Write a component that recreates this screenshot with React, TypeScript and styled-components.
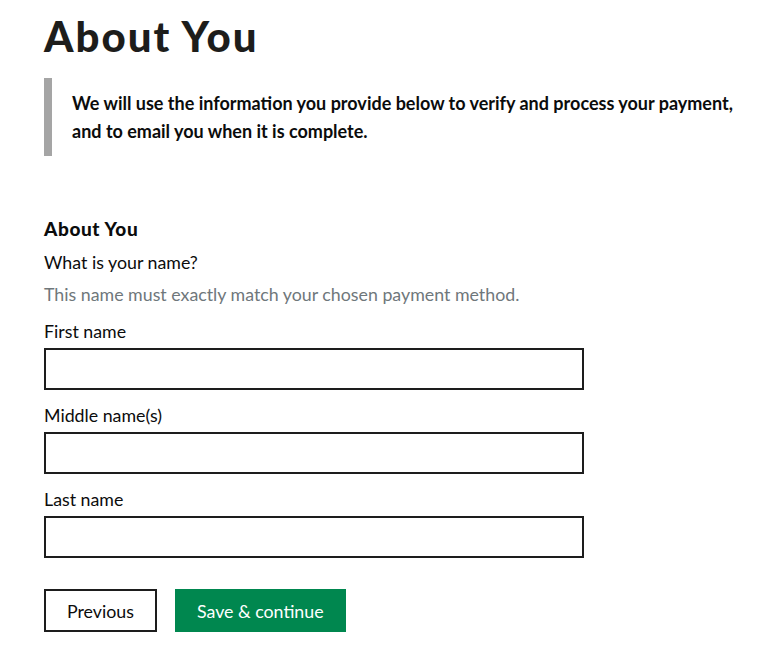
import { createGlobalStyle } from 'styled-components'
import styled from 'styled-components'

const GlobalStyle = createGlobalStyle`
  body {
    margin: 0;
    background: #ffffff;
    color: #0b0c0c;
    font-family: Lato, "Liberation Sans", sans-serif;
  }
`

const fields = ['First name', 'Middle name(s)', 'Last name']

const App = () => (
  <>
    <GlobalStyle />
    <Page>
      <Heading>About You</Heading>
      <Inset>
        We will use the information you provide below to verify and process your payment,
        and to email you when it is complete.
      </Inset>
      <Fieldset>
        <Legend>About You</Legend>
        <Question>What is your name?</Question>
        <Hint>This name must exactly match your chosen payment method.</Hint>
        {fields.map((f) => (
          <Group key={f}>
            <Label>{f}</Label>
            <Input type="text" />
          </Group>
        ))}
      </Fieldset>
      <Actions>
        <Button>Previous</Button>
        <Button primary>Save &amp; continue</Button>
      </Actions>
    </Page>
  </>
)

export default App

const Page = styled.div`
  padding: 12px 0 0 44px;
  width: 728px;
`

const Heading = styled.h1`
  margin: 0;
  font-family: Lato, sans-serif;
  font-weight: 900;
  font-size: 42px;
  line-height: 48px;
  letter-spacing: 2px;
  color: #1d1d1b;
`

const Inset = styled.div`
  margin-top: 18px;
  max-width: 690px;
  border-left: 8px solid #a5a5a5;
  padding: 11px 0 11px 20px;
  font-size: 18px;
  font-weight: 700;
  line-height: 28px;
  color: #0b0c0c;
`

const Fieldset = styled.div`
  margin-top: 61px;
  display: flex;
  flex-direction: column;
`

const Legend = styled.div`
  font-size: 19px;
  font-weight: 900;
  letter-spacing: 0.6px;
  line-height: 24px;
  color: #0b0c0c;
`

const Question = styled.div`
  margin-top: 9px;
  font-size: 17.8px;
  line-height: 24px;
`

const Hint = styled.div`
  margin-top: 8px;
  font-size: 17.8px;
  line-height: 24px;
  color: #6f777b;
`

const Group = styled.div`
  margin-top: 13px;
  display: flex;
  flex-direction: column;
  & + & {
    margin-top: 13px;
  }
`

const Label = styled.label`
  font-size: 17.8px;
  line-height: 24px;
  margin-bottom: 5px;
`

const Input = styled.input`
  box-sizing: border-box;
  width: 540px;
  height: 42px;
  border: 2px solid #1d1d1d;
  border-radius: 0;
  padding: 4px 8px;
  font: inherit;
  outline: none;
`

const Actions = styled.div`
  margin-top: 31px;
  display: flex;
  gap: 18px;
`

const Button = styled.button<{ primary?: boolean }>`
  box-sizing: border-box;
  height: 43px;
  padding: 0 ${(p) => (p.primary ? '22px' : '21px')};
  font-family: Lato, sans-serif;
  font-size: 17.8px;
  border-radius: 0;
  cursor: pointer;
  border: ${(p) => (p.primary ? 'none' : '2px solid #1d1d1d')};
  background: ${(p) => (p.primary ? '#00874f' : '#ffffff')};
  color: ${(p) => (p.primary ? '#ffffff' : '#0b0c0c')};
`
